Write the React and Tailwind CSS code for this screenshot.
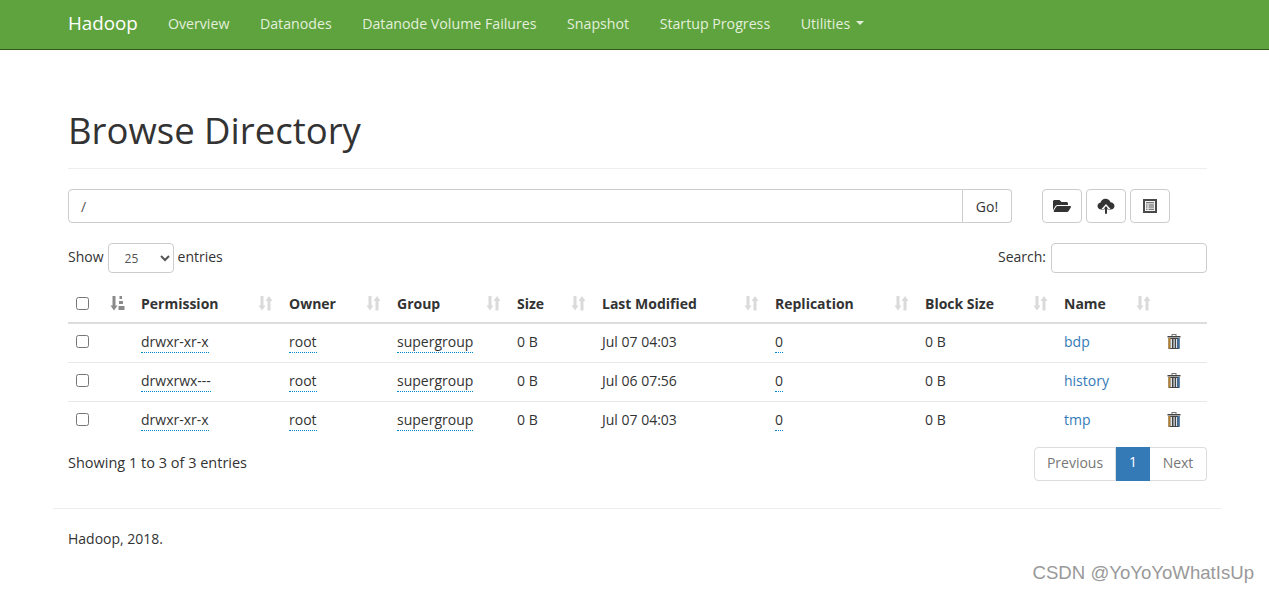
import { FaFolderOpen } from "react-icons/fa";

const FONT = "font-['Open_Sans','Noto_Sans',sans-serif]";

const navLinks = ["Overview", "Datanodes", "Datanode Volume Failures", "Snapshot", "Startup Progress"];

const columns = [
  { label: "", width: "w-[65px]" },
  { label: "Permission", width: "w-[148px]" },
  { label: "Owner", width: "w-[108px]" },
  { label: "Group", width: "w-[120px]" },
  { label: "Size", width: "w-[85px]" },
  { label: "Last Modified", width: "w-[173px]" },
  { label: "Replication", width: "w-[150px]" },
  { label: "Block Size", width: "w-[139px]" },
  { label: "Name", width: "w-[103px]" },
];

const rows = [
  { permission: "drwxr-xr-x", modified: "Jul 07 04:03", name: "bdp" },
  { permission: "drwxrwx---", modified: "Jul 06 07:56", name: "history" },
  { permission: "drwxr-xr-x", modified: "Jul 07 04:03", name: "tmp" },
];

function SortIcon({ active }) {
  return (
    <svg width="15" height="15" viewBox="0 0 15 15" className={active ? "text-[#8a8a8a]" : "text-[#dadada]"} fill="currentColor">
      <path d="M2.500 0h3v9.500h2L4 14.500.5 9.500h2z" />
      {active ? (
        <path d="M9.500 0h2.500v3H9.500zM9 5h4v3H9zM8.500 10h6v4h-6z" />
      ) : (
        <path d="M12.500 14.500h-3V5h-2L11 0l3.500 5h-2z" />
      )}
    </svg>
  );
}

function CloudIcon() {
  return (
    <svg width="18" height="16" viewBox="0 0 18 16" className="text-[#333]">
      <path d="M4.500 11.500C2 11.500 .5 9.800 .5 8c0-1.700 1.300-3 2.900-3.200C3.900 2.500 6 .8 8.500.8c2.400 0 4.300 1.400 5 3.500 2.200.1 4 1.700 4 3.800 0 1.900-1.500 3.400-3.600 3.400z" fill="currentColor" />
      <path d="M9 6 4.500 11H7.500v5h3v-5h3z" fill="#fff" />
      <path d="M9 8 6.800 10.800H8v5h2v-5h1.200z" fill="currentColor" />
    </svg>
  );
}

function ListIcon() {
  return (
    <svg width="14" height="14" viewBox="0 0 14 14">
      <rect x="1" y="1" width="12" height="12" fill="#f4f4f4" stroke="#4a4a4a" strokeWidth="2" />
      <path d="M3 3.200h8v1H3zM3 5.400h1.500v1H3zM5.500 5.400H11v1H5.500zM3 7.600h1.500v1H3zM5.500 7.600H11v1H5.500zM3 9.800h1.500v1H3zM5.500 9.800H11v1H5.500z" fill="#555" />
    </svg>
  );
}

function TrashIcon() {
  return (
    <svg width="14" height="15" viewBox="0 0 14 15">
      <path d="M4.500 0h5v2h-1V1h-3v1h-1z" fill="#777" />
      <path d="M0.500 2h13v1.500H.5z" fill="#444" />
      <path d="M1.500 4h11v11h-11z" fill="#444" />
      <path d="M1.500 4h2v10.500h-2z" fill="#b9822e" />
      <path d="M3.500 5h1.500v9h-1.500zM6.500 5h1.200v9H6.500zM9 5h1.200v9H9z" fill="#dfe5e8" />
      <path d="M10.500 4h2v10.500h-2z" fill="#3a6ea5" />
    </svg>
  );
}

function ToolButton({ children }) {
  return (
    <button className="w-10 h-[34px] flex items-center justify-center bg-white border border-[#ccc] rounded">
      {children}
    </button>
  );
}

function Dotted({ children }) {
  return <span className="border-b border-dotted border-[#0088cc] pb-px">{children}</span>;
}

function App() {
  return (
    <div className={`${FONT} bg-white text-[#333] text-[14px] h-[592px] overflow-hidden`}>
      {/* Navbar */}
      <nav className="h-[50px] bg-[#5fa33e] border-b border-[#2f5a1a] pl-[68px] pb-[2px] flex items-center">
        <a className="text-white text-[18.800px] mr-[30px]">Hadoop</a>
        <div className="flex items-center gap-[30.500px] text-[14.200px] text-[#e3efdc]">
          {navLinks.map((link) => (
            <a key={link}>{link}</a>
          ))}
          <a className="flex items-center gap-[6px]">
            Utilities
            <span className="w-0 h-0 border-x-4 border-x-transparent border-t-4 border-t-[#e3efdc]" />
          </a>
        </div>
      </nav>

      <div className="ml-[53px] w-[1169px]">
        <div className="px-[15px]">
          <div className="mt-[60px] pb-[18px] border-b border-[#eee]">
            <h1 className="text-[36.500px] leading-[40px]">Browse Directory</h1>
          </div>

          {/* Path bar */}
          <div className="mt-5 flex">
            <div className="flex w-[944px]">
              <div className="flex-1 h-[34px] border border-[#ccc] rounded-l px-3 flex items-center text-[#555]">/</div>
              <button className="w-[49px] h-[34px] border border-l-0 border-[#ccc] rounded-r">Go!</button>
            </div>
            <div className="ml-[30px] flex gap-1">
              <ToolButton><FaFolderOpen size={18} className="text-[#333]" /></ToolButton>
              <ToolButton><CloudIcon /></ToolButton>
              <ToolButton><ListIcon /></ToolButton>
            </div>
          </div>

          {/* Table controls */}
          <div className="mt-5 flex items-center justify-between">
            <div className="flex items-center">
              <span className="pb-[4px]">Show</span>
              <select className="mx-[4px] w-[66px] h-[30px] border border-[#ccc] rounded px-3 text-[12px] text-[#555]">
                <option>25</option>
              </select>
              <span className="pb-[4px]">entries</span>
            </div>
            <div className="flex items-center">
              <span className="pb-[4px]">Search:</span>
              <input className="ml-[5px] w-[156px] h-[30px] border border-[#ccc] rounded" />
            </div>
          </div>

          {/* Table */}
          <table className="mt-[10px] w-[1139px] border-collapse table-fixed">
            <thead>
              <tr className="border-b-2 border-[#ddd]">
                {columns.map((col, i) => (
                  <th key={i} className={`${col.width} h-[40px] px-2 pt-[9px] pb-[7px] text-left font-bold`}>
                    <div className="flex items-center justify-between">
                      {i === 0 ? <input type="checkbox" className="w-[13px] h-[13px]" /> : <span>{col.label}</span>}
                      <SortIcon active={i === 0} />
                    </div>
                  </th>
                ))}
                <th className="p-2" />
              </tr>
            </thead>
            <tbody>
              {rows.map((row, i) => (
                <tr key={i} className={i > 0 ? "border-t border-[#e8e8e8]" : ""}>
                  <td className="h-[39px] px-2 pb-[2px]"><input type="checkbox" className="w-[13px] h-[13px] block" /></td>
                  <td className="px-2 pb-[2px]"><Dotted>{row.permission}</Dotted></td>
                  <td className="px-2 pb-[2px]"><Dotted>root</Dotted></td>
                  <td className="px-2 pb-[2px]"><Dotted>supergroup</Dotted></td>
                  <td className="px-2 pb-[2px]">0 B</td>
                  <td className="px-2 pb-[2px]">{row.modified}</td>
                  <td className="px-2 pb-[2px]"><Dotted>0</Dotted></td>
                  <td className="px-2 pb-[2px]">0 B</td>
                  <td className="px-2 pb-[2px] text-[#337ab7]">{row.name}</td>
                  <td className="px-2 pb-[2px]"><TrashIcon /></td>
                </tr>
              ))}
            </tbody>
          </table>

          {/* Pagination */}
          <div className="mt-[7px] flex items-center justify-between">
            <span className="text-[14.500px] pb-[2px]">Showing 1 to 3 of 3 entries</span>
            <div className="flex h-[34px] leading-[30px]">
              <span className="w-[82px] text-center border border-[#ddd] rounded-l text-[#777]">Previous</span>
              <span className="w-[34px] text-center bg-[#337ab7] text-white">1</span>
              <span className="w-[57px] text-center border border-l-0 border-[#ddd] rounded-r text-[#777]">Next</span>
            </div>
          </div>
        </div>

        {/* Footer */}
        <div className="mt-[27px] border-t border-[#eee] px-[15px] pt-[19px]">Hadoop, 2018.</div>
      </div>

      <div className="text-right pr-[15px] mt-[10px] text-[#999] text-[18.600px] font-['Liberation_Sans',sans-serif]">CSDN @YoYoYoWhatIsUp</div>
    </div>
  );
}

export default App;
